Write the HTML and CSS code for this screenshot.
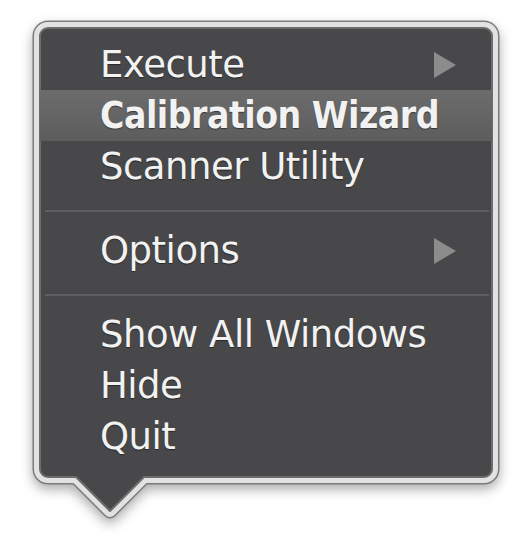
FILE: index.html
```html
<!DOCTYPE html>
<html>
<head>
<meta charset="utf-8">
<link rel="stylesheet" href="styles.css">
</head>
<body>
<div class="stage">
  <svg class="frame" width="522" height="551" viewBox="0 0 522 551">
    <path class="f-outer" d="M48,28 H484 A8,8 0 0 1 492,36 V469 A8,8 0 0 1 484,477 H144 L110,511 L76,477 H48 A8,8 0 0 1 40,469 V36 A8,8 0 0 1 48,28 Z"/>
    <path class="f-band" d="M48,28 H484 A8,8 0 0 1 492,36 V469 A8,8 0 0 1 484,477 H144 L110,511 L76,477 H48 A8,8 0 0 1 40,469 V36 A8,8 0 0 1 48,28 Z"/>
    <path class="f-fill" d="M48,28 H484 A8,8 0 0 1 492,36 V469 A8,8 0 0 1 484,477 H144 L110,511 L76,477 H48 A8,8 0 0 1 40,469 V36 A8,8 0 0 1 48,28 Z"/>
  </svg>
  <div class="menu">
    <div class="item"><span class="label">Execute</span><span class="sub"></span></div>
    <div class="item active"><span class="label">Calibration Wizard</span></div>
    <div class="item"><span class="label">Scanner Utility</span></div>
    <div class="sep"></div>
    <div class="item"><span class="label">Options</span><span class="sub"></span></div>
    <div class="sep"></div>
    <div class="item"><span class="label">Show All Windows</span></div>
    <div class="item"><span class="label">Hide</span></div>
    <div class="item"><span class="label">Quit</span></div>
  </div>
</div>
</body>
</html>
```
FILE: styles.css
```css
html, body {
  margin: 0;
  padding: 0;
  background: #ffffff;
}

.stage {
  position: relative;
  width: 522px;
  height: 551px;
  box-sizing: border-box;
  padding: 28px 30px 0 40px;
}

.frame {
  position: absolute;
  left: 0;
  top: 0;
  filter: drop-shadow(0 5px 6px rgba(0, 0, 0, 0.32));
}

.f-outer {
  fill: none;
  stroke: #7c7c7c;
  stroke-width: 15;
  stroke-linejoin: round;
}

.f-band {
  fill: none;
  stroke: #e2e2e2;
  stroke-width: 12;
  stroke-linejoin: round;
}

.f-fill {
  fill: #48484a;
  stroke: #6c6c6c;
  stroke-width: 2;
  stroke-linejoin: round;
}

.menu {
  position: relative;
  width: 452px;
  padding: 11px 0 14px;
  font-family: "DejaVu Sans", "Liberation Sans", sans-serif;
  font-size: 37px;
  letter-spacing: -0.5px;
  color: #f2f2f2;
}

.item {
  display: flex;
  align-items: center;
  justify-content: space-between;
  height: 51px;
  line-height: 51px;
  padding: 0 36px 0 60px;
  text-shadow: 0 1px 1px rgba(0, 0, 0, 0.45);
}

.item.active {
  background: linear-gradient(to bottom, #6c6c6c, #5d5d5d);
  font-family: "DejaVu Sans Condensed", "DejaVu Sans", sans-serif;
  font-stretch: condensed;
  font-weight: bold;
}

.sub {
  width: 0;
  height: 0;
  border-top: 13px solid transparent;
  border-bottom: 13px solid transparent;
  border-left: 22px solid #8c8c8c;
}

.sep {
  height: 2px;
  margin: 18px 3px 13px 5px;
  background: #5e5e60;
}
```
